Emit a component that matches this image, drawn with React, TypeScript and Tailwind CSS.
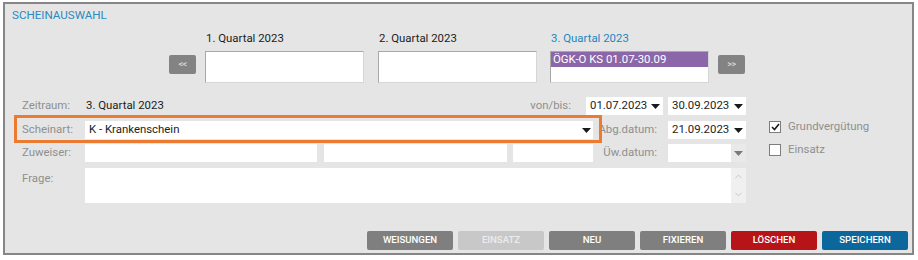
import { ChevronDown, ChevronUp } from 'lucide-react'

const FONT = { fontFamily: 'Roboto, "Liberation Sans", Arial, sans-serif' }

function Caret({ gray }: { gray?: boolean }) {
  return (
    <svg width="9" height="5" viewBox="0 0 9 5" className="shrink-0">
      <path d="M0 0h9L4.5 5z" fill={gray ? '#7a7a7a' : '#1a1a1a'} />
    </svg>
  )
}

function DateSelect({ value, width }: { value: string; width: string }) {
  return (
    <div className={`${width} h-[18px] bg-white flex items-center justify-between pl-[4px] pr-[3px] text-[11.4px] text-[#1c1c1c]`}>
      <span>{value}</span>
      <Caret />
    </div>
  )
}

function Label({ children, className = '' }: { children: string; className?: string }) {
  return <div className={`text-[11.4px] text-[#8f8f8f] ${className}`}>{children}</div>
}

function QuartalBox({ title, active, entry }: { title: string; active?: boolean; entry?: string }) {
  return (
    <div className="w-[159px] flex flex-col">
      <div className={`h-[16px] leading-[16px] text-[11.4px] pl-[1px] ${active ? 'text-[#1f86bf]' : 'text-[#1c1c1c]'}`}>
        {title}
      </div>
      <div className="mt-[5px] h-[32px] bg-white border border-t-[#a8a8a8] border-l-[#a8a8a8] border-r-[#d6d6d6] border-b-[#d6d6d6]">
        {entry && (
          <div className="h-[15px] bg-[#8b67a9] text-white text-[11.4px] leading-[15px] pl-[2px]">{entry}</div>
        )}
      </div>
    </div>
  )
}

function NavButton({ children, className }: { children: string; className: string }) {
  return (
    <div
      className={`${className} mt-[25px] w-[27px] h-[19px] rounded-[2px] bg-[#838383] flex items-center justify-center text-[9px] font-bold text-[#d2d2d2] tracking-[-0.5px]`}
    >
      {children}
    </div>
  )
}

function Checkbox({ checked, label, className = '' }: { checked?: boolean; label: string; className?: string }) {
  return (
    <div className={`h-[14px] flex items-center gap-[7px] ${className}`}>
      <div className="w-[12px] h-[12px] bg-white border border-[#7d7d7d] flex items-center justify-center">
        {checked && (
          <svg width="9" height="8" viewBox="0 0 9 8">
            <path d="M1 4l2.5 2.5L8 1" stroke="#1a1a1a" strokeWidth="1.6" fill="none" />
          </svg>
        )}
      </div>
      <span className="text-[11.4px] text-[#8f8f8f]">{label}</span>
    </div>
  )
}

const BUTTONS = [
  { label: 'WEISUNGEN', cls: 'bg-[#7f7f7f] text-white' },
  { label: 'EINSATZ', cls: 'bg-[#c8c8c8] text-[#ececec]' },
  { label: 'NEU', cls: 'bg-[#7f7f7f] text-white' },
  { label: 'FIXIEREN', cls: 'bg-[#7f7f7f] text-white' },
  { label: 'LÖSCHEN', cls: 'bg-[#b71419] text-white' },
  { label: 'SPEICHERN', cls: 'bg-[#0b679c] text-white' },
]

export default function App() {
  return (
    <div className="w-[918px] h-[260px] bg-white pt-[2px] pl-[3px]" style={FONT}>
      <div className="relative w-[911px] h-[253px] border-2 border-[#868686] bg-[#e5e5e5]">
        <div className="pt-[4px] pl-[7px] h-[18px] text-[11.6px] leading-[14px] text-[#2a8ac2]">SCHEINAUSWAHL</div>

        <div className="mt-[8px] flex items-start">
          <NavButton className="ml-[164px]">{'<<'}</NavButton>
          <div className="ml-[9px]">
            <QuartalBox title="1. Quartal 2023" />
          </div>
          <div className="ml-[14px]">
            <QuartalBox title="2. Quartal 2023" />
          </div>
          <div className="ml-[13px]">
            <QuartalBox title="3. Quartal 2023" active entry="ÖGK-O KS 01.07-30.09" />
          </div>
          <NavButton className="ml-[9px]">{'>>'}</NavButton>
        </div>

        <div className="mt-[14px] pl-[17px] flex items-start">
          <div className="w-[724px] flex flex-col">
            <div className="h-[18px] flex items-center">
              <Label className="w-[63px]">Zeitraum:</Label>
              <div className="flex-1 text-[11.4px] text-[#1c1c1c] pl-[1px]">3. Quartal 2023</div>
              <Label className="pr-[15px]">von/bis:</Label>
              <DateSelect value="01.07.2023" width="w-[77px]" />
              <div className="ml-[5px]">
                <DateSelect value="30.09.2023" width="w-[78px]" />
              </div>
            </div>

            <div className="mt-[6px] h-[18px] flex items-center">
              <Label className="w-[63px]">Scheinart:</Label>
              <div className="w-[508px] h-[18px] bg-white flex items-center justify-between pl-[4px] pr-[2px] text-[11.4px] text-[#1c1c1c]">
                <span>K - Krankenschein</span>
                <Caret />
              </div>
              <Label className="w-[75px] text-right pr-[11px]">Abg.datum:</Label>
              <DateSelect value="21.09.2023" width="w-[78px]" />
            </div>

            <div className="mt-[5px] h-[18px] flex items-center">
              <Label className="w-[63px]">Zuweiser:</Label>
              <div className="w-[232px] h-[18px] bg-white" />
              <div className="ml-[7px] w-[183px] h-[18px] bg-white" />
              <div className="ml-[6px] w-[80px] h-[18px] bg-white" />
              <Label className="w-[75px] text-right pr-[11px]">Üw.datum:</Label>
              <div className="w-[78px] h-[18px] flex">
                <div className="flex-1 bg-white" />
                <div className="w-[15px] bg-[#e9e9e9] flex items-center justify-center">
                  <Caret gray />
                </div>
              </div>
            </div>

            <div className="mt-[6px] h-[35px] flex items-start">
              <Label className="w-[63px] pt-[2px]">Frage:</Label>
              <div className="w-[661px] h-[35px] flex">
                <div className="flex-1 bg-white" />
                <div className="w-[15px] bg-[#f0f0f0] flex flex-col items-center justify-between py-[3px] text-[#b4b4b4]">
                  <ChevronUp size={11} strokeWidth={1.5} />
                  <ChevronDown size={11} strokeWidth={1.5} />
                </div>
              </div>
            </div>
          </div>

          <div className="ml-[23px] mt-[23px] flex flex-col">
            <Checkbox checked label="Grundvergütung" />
            <Checkbox label="Einsatz" className="mt-[9px]" />
          </div>
        </div>

        <div className="mt-[28px] pr-[4px] flex justify-end gap-[5px]">
          {BUTTONS.map((b) => (
            <div
              key={b.label}
              className={`w-[86px] h-[19px] rounded-[2px] flex items-center justify-center text-[9.6px] font-medium ${b.cls}`}
            >
              {b.label}
            </div>
          ))}
        </div>

        <div className="absolute left-[9px] top-[111px] w-[588px] h-[28px] border-[3px] border-[#ec7a30] pointer-events-none" />
      </div>
    </div>
  )
}
